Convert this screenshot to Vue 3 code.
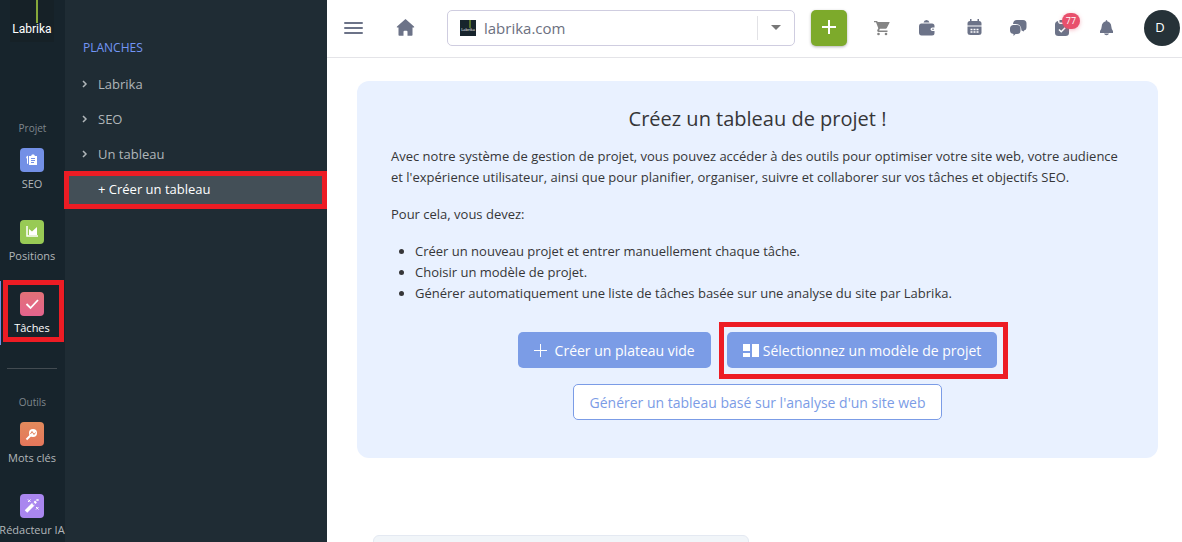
<script setup>
import { ref } from 'vue'

const site = ref('labrika.com')

const boards = ['Labrika', 'SEO', 'Un tableau']

const projectItems = [
  { label: 'SEO', icon: 'seo' },
  { label: 'Positions', icon: 'chart' },
  { label: 'Tâches', icon: 'check', active: true }
]
const toolItems = [
  { label: 'Mots clés', icon: 'key' },
  { label: 'Rédacteur IA', icon: 'wand' }
]
const sections = [
  { title: 'Projet', items: projectItems },
  { title: 'Outils', items: toolItems }
]
</script>

<template>
  <div class="shell">
    <nav class="rail" aria-label="Navigation principale">
      <a class="brand" href="#"><span class="brand-line"></span>Labrika</a>
      <section v-for="s in sections" :key="s.title" class="group">
        <h2 class="group-title">{{ s.title }}</h2>
        <a
          v-for="item in s.items"
          :key="item.label"
          href="#"
          class="rail-item"
          :class="{ active: item.active }"
        >
          <span class="tile" :class="item.icon">
            <svg viewBox="0 0 24 24" width="24" height="24" aria-hidden="true">
              <g v-if="item.icon === 'seo'">
                <path fill="#fff" d="M9 8h2l1-1.500h2L15 8h2v9H9z" />
                <path fill="#fff" d="M6 9l2-1.500V16l-1-.5V11z" />
                <path d="M11 10.500h4M11 12.500h4M11 14.500h3" stroke="#7390e6" stroke-width="1" />
              </g>
              <g v-else-if="item.icon === 'chart'">
                <path d="M7 6v10h11" fill="none" stroke="#fff" stroke-width="1.500" />
                <path fill="#fff" d="M9 15V9l3 2.500L17 7v8z" />
              </g>
              <path
                v-else-if="item.icon === 'check'"
                d="M6.500 12l4 4L18 8"
                fill="none"
                stroke="#fff"
                stroke-width="1.800"
              />
              <g v-else-if="item.icon === 'key'">
                <circle cx="13" cy="11" r="4" fill="#fff" />
                <path d="M10.500 13.500L6.500 17.500" stroke="#fff" stroke-width="2" />
                <path d="M10.500 12l1.500-2.500 2 3 1.500-2" fill="none" stroke="#e2805a" stroke-width="1" />
              </g>
              <g v-else>
                <path d="M6 17.500L13.500 10" stroke="#fff" stroke-width="3.500" />
                <path d="M12.300 9.500l2.200 2.200" stroke="#a986ef" stroke-width="1" />
                <path d="M14.500 9l1.500-1.500" stroke="#fff" stroke-width="2.500" />
                <path
                  d="M8 5.500l2.500 2.500M10.500 5.500L8 8M16.500 5l2 2M18.500 5l-2 2M16 13l2.500 2.500M18.500 13L16 15.500"
                  stroke="#fff"
                  stroke-width="1"
                />
              </g>
            </svg>
          </span>
          <span class="rail-label">{{ item.label }}</span>
        </a>
      </section>
    </nav>

    <aside class="panel">
      <h2 class="panel-title">PLANCHES</h2>
      <a v-for="b in boards" :key="b" href="#" class="board">
        <svg class="chevron" viewBox="0 0 6 8" width="6" height="8" aria-hidden="true">
          <path d="M1 1l3 3-3 3" fill="none" stroke="currentColor" stroke-width="1.500" />
        </svg>
        {{ b }}
      </a>
      <a href="#" class="board create">+ Créer un tableau</a>
    </aside>

    <div class="main">
      <header class="topbar">
        <button class="icon-btn menu" aria-label="Menu">
          <svg viewBox="0 0 24 24" width="24" height="24">
            <path d="M3 7h17M3 12h17M3 17h17" stroke="currentColor" stroke-width="2" stroke-linecap="round" />
          </svg>
        </button>
        <button class="icon-btn home" aria-label="Accueil">
          <svg viewBox="0 0 24 24" width="24" height="24" fill="currentColor">
            <path d="M11.500 3L20 10.500q.8 1-.3 1H18.500V19q0 .8-.8.800H13.500v-4q0-1-1-1h-2q-1 0-1 1v4H5.300q-.8 0-.8-.8v-7.500H3.300q-1 0-.3-1z" />
          </svg>
        </button>

        <div class="picker">
          <span class="favicon"><span class="favicon-line"></span>Labrika</span>
          <select v-model="site" aria-label="Site">
            <option value="labrika.com">labrika.com</option>
          </select>
          <span class="caret"></span>
        </div>

        <button class="add" aria-label="Ajouter">
          <svg viewBox="0 0 16 16" width="16" height="16">
            <path d="M8 0v14M1 7h14" stroke="#fff" stroke-width="2" />
          </svg>
        </button>

        <div class="actions">
          <button class="icon-btn cart" aria-label="Panier">
            <svg viewBox="0 0 24 24" width="24" height="24" fill="currentColor">
              <path d="M4 5h3l.8 1H19.300q.5.300.2.800L16.800 12q-.4.700-1.200.700H10l-.8 1.300q0 .5.400.5H17.500V16H8.500q-2-.3-1.200-2l1-1.800L6 6.300H4z" />
              <circle cx="8.500" cy="18" r="1.300" />
              <circle cx="16" cy="18" r="1.300" />
            </svg>
          </button>
          <button class="icon-btn" aria-label="Portefeuille">
            <svg viewBox="0 0 24 24" width="24" height="24" fill="currentColor">
              <path d="M8.500 6.500q.5-2.300 3-2.600 2.500.3 3 2.600z" />
              <path d="M6.500 7.500h10.500q2.500 0 2.500 2.500v1.500h-2q-2 0-2 1.700t2 1.800h2V17q0 2.500-2.500 2.500H6.500q-2.500 0-2.500-3V10.500q0-3 2.500-3z" />
              <circle cx="18" cy="13.200" r=".8" />
            </svg>
          </button>
          <button class="icon-btn" aria-label="Calendrier">
            <svg viewBox="0 0 24 24" width="24" height="24" fill="currentColor">
              <path d="M7.500 9.500V7.500q0-2.500 2.500-2.500V3h1.500v2h6V3H19v2q2.500 0 2.500 2.500v2z" />
              <path d="M7.500 10.500h14v6q0 2.500-3 2.500h-8q-3 0-3-2.500z" />
              <path d="M10.500 13.500h8M10.500 16h8" stroke="#fff" stroke-width="1.500" stroke-dasharray="2 1" />
            </svg>
          </button>
          <button class="icon-btn" aria-label="Messages">
            <svg viewBox="0 0 24 24" width="24" height="24" fill="currentColor">
              <path d="M8 8Q8.300 4 12 4h6q3.500 0 3.500 3.500V11q0 3-2.500 3.500v1l-2.500-1q-.2-6.300-6-6.500z" />
              <path d="M8 9h4q3.500 0 3.500 3.500v2q0 3.500-3.500 3.500h-1.500L8.500 20v-2Q5 17.500 5 14.500v-2q0-3 3-3.500z" />
            </svg>
          </button>
          <button class="icon-btn" aria-label="Tâches, 77">
            <svg viewBox="0 0 24 24" width="24" height="24" fill="currentColor">
              <path d="M8 5Q8 8 10.500 8H14q2.500 0 2.500-3 2.500.5 2.500 3.500v8.500q0 3-3.500 3H8.500Q5 20 5 17V8.500q0-3 3-3.500z" />
              <path d="M9.500 4h5.500v2.500H9.500z" />
              <path d="M9 13.500l2.200 2.200 4-4" fill="none" stroke="#fff" stroke-width="1.500" />
            </svg>
            <span class="badge">77</span>
          </button>
          <button class="icon-btn" aria-label="Notifications">
            <svg viewBox="0 0 24 24" width="24" height="24" fill="currentColor">
              <path d="M11.500 4q.8 0 1 1.500 3.500.8 3.800 5 .2 3 1.700 4.500v2H5v-2q1.500-1.500 1.700-4.500.3-4.200 3.800-5 .2-1.500 1-1.500z" />
              <path d="M9 17.500h5q-.5 1.800-2.500 1.800T9 17.500z" />
            </svg>
          </button>
        </div>

        <button class="avatar">D</button>
      </header>

      <main class="content">
        <section class="card">
          <h1>Créez un tableau de projet !</h1>
          <p>
            Avec notre système de gestion de projet, vous pouvez accéder à des outils pour optimiser
            votre site web, votre audience et l'expérience utilisateur, ainsi que pour planifier,
            organiser, suivre et collaborer sur vos tâches et objectifs SEO.
          </p>
          <p>Pour cela, vous devez:</p>
          <ul>
            <li>Créer un nouveau projet et entrer manuellement chaque tâche.</li>
            <li>Choisir un modèle de projet.</li>
            <li>Générer automatiquement une liste de tâches basée sur une analyse du site par Labrika.</li>
          </ul>
          <div class="buttons">
            <button class="btn">
              <svg class="plus" viewBox="0 0 13 13" width="13" height="13" aria-hidden="true">
                <path d="M6.500 0v13M0 6.500h13" stroke="#fff" stroke-width="1" />
              </svg>
              Créer un plateau vide
            </button>
            <div class="framed">
              <button class="btn template">
                <svg viewBox="0 0 16 13" width="16" height="13" fill="#fff" aria-hidden="true">
                  <rect width="7" height="7" />
                  <rect y="9" width="7" height="4" />
                  <rect x="9" width="7" height="13" />
                </svg>
                Sélectionnez un modèle de projet
              </button>
            </div>
            <button class="btn outline">Générer un tableau basé sur l'analyse d'un site web</button>
          </div>
        </section>
        <section class="next-card"></section>
      </main>
    </div>
  </div>
</template>

<style>
body {
  margin: 0;
}
</style>

<style scoped>
.shell {
  display: flex;
  height: 100vh;
  overflow: hidden;
  background: #fff;
  font-family: "Open Sans", sans-serif;
  font-size: 13px;
  color: #363638;
}
.shell * {
  box-sizing: border-box;
}
button {
  font: inherit;
  border: 0;
  padding: 0;
  background: none;
  cursor: pointer;
}
a {
  text-decoration: none;
}
svg {
  display: block;
  flex: none;
}

/* left rail */
.rail {
  flex: none;
  width: 65px;
  background: #17242c;
  overflow: hidden;
}
.brand {
  position: relative;
  display: flex;
  align-items: center;
  justify-content: center;
  width: 44px;
  height: 42px;
  margin: 0 10px;
  padding-top: 15px;
  background: #162127;
  color: #fff;
  font-family: Roboto, sans-serif;
  font-size: 12px;
}
.brand-line {
  position: absolute;
  left: 26px;
  top: 0;
  width: 2px;
  height: 23px;
  background: #86a83a;
}
.group {
  display: flex;
  flex-direction: column;
  gap: 8px;
  padding-top: 78px;
}
.group + .group {
  position: relative;
  margin-top: 23px;
  padding-top: 26px;
}
.group + .group::before {
  content: "";
  position: absolute;
  top: 0;
  left: 7px;
  right: 8px;
  height: 1px;
  background: #434b51;
}
.group-title {
  margin: 0 0 -7px;
  font-size: 10px;
  line-height: 16px;
  font-weight: 400;
  text-align: center;
  color: #7f878c;
}
.rail-item {
  position: relative;
  display: flex;
  flex-direction: column;
  align-items: center;
  gap: 4px;
  width: 64px;
  height: 64px;
  padding-top: 11px;
  color: #b2b7ba;
  font-size: 11px;
  line-height: 16px;
  white-space: nowrap;
}
.rail-item.active {
  color: #fff;
  border-left: 1px solid #7390e6;
  padding-right: 1px;
}
.rail-item.active::after {
  content: "";
  position: absolute;
  inset: -1px 0 3px 2px;
  border: 5px solid #ed1c24;
}
.tile {
  width: 24px;
  height: 24px;
  border-radius: 4px;
}
.tile.seo {
  background: #7390e6;
}
.tile.chart {
  background: #98ca55;
}
.tile.check {
  background: linear-gradient(#e37177, #e3638d);
}
.tile.key {
  background: linear-gradient(#e28a5c, #e5765b);
}
.tile.wand {
  background: #a986ef;
}

/* boards panel */
.panel {
  flex: none;
  width: 262px;
  padding-top: 32px;
  background: #1f2c34;
}
.panel-title {
  margin: 0 0 2px 18px;
  font-size: 12px;
  line-height: 32px;
  font-weight: 400;
  color: #7396f5;
}
.board {
  display: flex;
  align-items: center;
  gap: 10px;
  height: 35px;
  padding-left: 17px;
  color: #b0b6b9;
}
.board.create {
  position: relative;
  padding-left: 33px;
  background: #434f57;
  color: #fff;
}
.board.create::after {
  content: "";
  position: absolute;
  inset: 0 0 -3px -1px;
  border: 5px solid #ed1c24;
}

/* top bar */
.main {
  flex: 1;
  min-width: 0;
}
.topbar {
  display: flex;
  align-items: center;
  height: 58px;
  padding: 0 2px 2px 0;
  border-bottom: 1px solid #e4e4e8;
}
.icon-btn {
  position: relative;
  display: flex;
  flex: none;
  align-items: center;
  justify-content: center;
  width: 45px;
  height: 36px;
  color: #6c7388;
}
.menu {
  width: 53px;
}
.home {
  width: 51px;
}
.cart {
  color: #848484;
}
.picker {
  position: relative;
  flex: 1;
  display: flex;
  align-items: center;
  height: 36px;
  margin-left: 16px;
  padding-left: 12px;
  border: 1px solid #cfcde0;
  border-radius: 5px;
}
.favicon {
  position: relative;
  display: flex;
  align-items: center;
  justify-content: center;
  flex: none;
  width: 16px;
  height: 16px;
  padding-top: 4px;
  overflow: hidden;
  background: #17242c;
  color: #fff;
  font-size: 4px;
}
.favicon-line {
  position: absolute;
  top: 0;
  left: 9px;
  width: 2px;
  height: 8px;
  background: #56702c;
}
select {
  appearance: none;
  flex: 1;
  height: 34px;
  padding: 0 0 0 8px;
  border: 0;
  background: none;
  color: #6c7080;
  font: 15px/20px "Open Sans", sans-serif;
}
.caret {
  display: flex;
  align-items: center;
  justify-content: center;
  width: 37px;
  height: 24px;
  border-left: 1px solid #e2e2e6;
  pointer-events: none;
}
.caret::before {
  content: "";
  border: 5px solid transparent;
  border-top-color: #777;
  border-bottom: 0;
}
.add {
  display: flex;
  align-items: center;
  justify-content: center;
  width: 36px;
  height: 36px;
  margin: 0 12px 0 16px;
  border-radius: 5px;
  background: #7daa2b;
  box-shadow: 0 1px 3px rgba(0, 0, 0, 0.3);
}
.actions {
  display: flex;
}
.badge {
  position: absolute;
  left: 23px;
  top: 3px;
  width: 18px;
  height: 16px;
  border-radius: 8px;
  background: #e8506c;
  box-shadow: 0 1px 4px rgba(232, 80, 108, 0.4);
  color: #fff;
  font-size: 9px;
  line-height: 16px;
  text-align: center;
}
.avatar {
  flex: none;
  width: 36px;
  height: 36px;
  margin-left: 15px;
  padding: 0 4px 2px 0;
  border-radius: 50%;
  background: #263238;
  color: #fff;
  font-size: 13px;
}

/* content */
.content {
  padding: 23px 24px 0 30px;
}
.card {
  padding: 24px 34px 38px;
  border-radius: 12px;
  background: #e9f1ff;
}
h1 {
  margin: 0 0 13px;
  font-size: 20px;
  line-height: 28px;
  font-weight: 400;
  text-align: center;
}
p {
  margin: 0 0 16px;
  line-height: 21px;
}
ul {
  margin: 0;
  padding-left: 24px;
  line-height: 21px;
}
.buttons {
  display: flex;
  flex-wrap: wrap;
  justify-content: center;
  gap: 16px;
  max-width: 560px;
  margin: 28px auto 0;
}
.btn {
  display: flex;
  align-items: center;
  gap: 8px;
  height: 36px;
  padding: 0 16px;
  border-radius: 5px;
  background: #7b9ce6;
  color: #fff;
  font-size: 14px;
}
.template {
  gap: 4px;
}
.outline {
  border: 1px solid #7b9ce6;
  background: #fff;
  color: #7b9ce6;
}
.framed {
  position: relative;
}
.framed::after {
  content: "";
  position: absolute;
  inset: -10px -11px -11px -8px;
  border: 5px solid #ed1c24;
  pointer-events: none;
}
.next-card {
  width: 47%;
  height: 120px;
  margin: 77px 0 0 16px;
  border: 1px solid #e4e9f2;
  border-radius: 6px;
  background: #f1f5f9;
}
</style>
